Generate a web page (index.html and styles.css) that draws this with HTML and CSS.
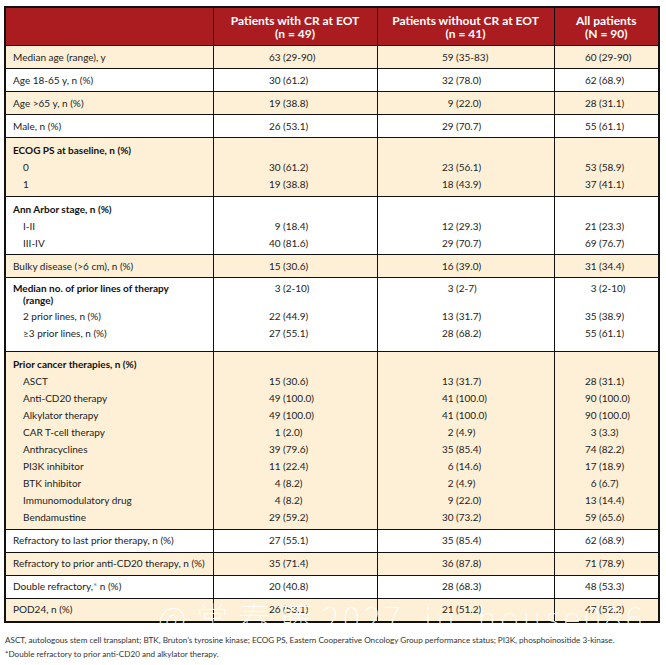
FILE: index.html
```html
<!DOCTYPE html>
<html>
<head>
<meta charset="utf-8">
<link rel="stylesheet" href="styles.css">
</head>
<body>
<div class="page">
  <table class="tbl">
    <colgroup>
      <col class="c1"><col class="c2"><col class="c3"><col class="c4">
    </colgroup>
    <thead>
      <tr>
        <th></th>
        <th>Patients with CR at EOT<br>(n = 49)</th>
        <th>Patients without CR at EOT<br>(n = 41)</th>
        <th>All patients<br>(N = 90)</th>
      </tr>
    </thead>
    <tbody>
      <tr class="cream">
        <td class="l"><div class="ln">Median age (range), y</div></td>
        <td class="v v2"><div class="ln"><span class="n">63</span> (29-90)</div></td>
        <td class="v v3"><div class="ln"><span class="n">59</span> (35-83)</div></td>
        <td class="v v4"><div class="ln"><span class="n">60</span> (29-90)</div></td>
      </tr>
      <tr>
        <td class="l"><div class="ln">Age 18-65 y, n (%)</div></td>
        <td class="v v2"><div class="ln"><span class="n">30</span> (61.2)</div></td>
        <td class="v v3"><div class="ln"><span class="n">32</span> (78.0)</div></td>
        <td class="v v4"><div class="ln"><span class="n">62</span> (68.9)</div></td>
      </tr>
      <tr class="cream">
        <td class="l"><div class="ln">Age &gt;65 y, n (%)</div></td>
        <td class="v v2"><div class="ln"><span class="n">19</span> (38.8)</div></td>
        <td class="v v3"><div class="ln"><span class="n">9</span> (22.0)</div></td>
        <td class="v v4"><div class="ln"><span class="n">28</span> (31.1)</div></td>
      </tr>
      <tr>
        <td class="l"><div class="ln">Male, n (%)</div></td>
        <td class="v v2"><div class="ln"><span class="n">26</span> (53.1)</div></td>
        <td class="v v3"><div class="ln"><span class="n">29</span> (70.7)</div></td>
        <td class="v v4"><div class="ln"><span class="n">55</span> (61.1)</div></td>
      </tr>
      <tr class="cream g">
        <td class="l">
          <div class="ln b">ECOG PS at baseline, n (%)</div>
          <div class="ln sub">0</div>
          <div class="ln sub">1</div>
        </td>
        <td class="v v2"><div class="ln"></div><div class="ln"><span class="n">30</span> (61.2)</div><div class="ln"><span class="n">19</span> (38.8)</div></td>
        <td class="v v3"><div class="ln"></div><div class="ln"><span class="n">23</span> (56.1)</div><div class="ln"><span class="n">18</span> (43.9)</div></td>
        <td class="v v4"><div class="ln"></div><div class="ln"><span class="n">53</span> (58.9)</div><div class="ln"><span class="n">37</span> (41.1)</div></td>
      </tr>
      <tr class="g">
        <td class="l">
          <div class="ln b">Ann Arbor stage, n (%)</div>
          <div class="ln sub">I-II</div>
          <div class="ln sub">III-IV</div>
        </td>
        <td class="v v2"><div class="ln"></div><div class="ln"><span class="n">9</span> (18.4)</div><div class="ln"><span class="n">40</span> (81.6)</div></td>
        <td class="v v3"><div class="ln"></div><div class="ln"><span class="n">12</span> (29.3)</div><div class="ln"><span class="n">29</span> (70.7)</div></td>
        <td class="v v4"><div class="ln"></div><div class="ln"><span class="n">21</span> (23.3)</div><div class="ln"><span class="n">69</span> (76.7)</div></td>
      </tr>
      <tr class="cream">
        <td class="l"><div class="ln">Bulky disease (&gt;6 cm), n (%)</div></td>
        <td class="v v2"><div class="ln"><span class="n">15</span> (30.6)</div></td>
        <td class="v v3"><div class="ln"><span class="n">16</span> (39.0)</div></td>
        <td class="v v4"><div class="ln"><span class="n">31</span> (34.4)</div></td>
      </tr>
      <tr class="g med">
        <td class="l">
          <div class="ttl b">Median no. of prior lines of therapy<br>(range)</div>
          <div class="ln sub">2 prior lines, n (%)</div>
          <div class="ln sub">≥3 prior lines, n (%)</div>
        </td>
        <td class="v v2"><div class="ttl"><span class="n">3</span> (2-10)</div><div class="ln"><span class="n">22</span> (44.9)</div><div class="ln"><span class="n">27</span> (55.1)</div></td>
        <td class="v v3"><div class="ttl"><span class="n">3</span> (2-7)</div><div class="ln"><span class="n">13</span> (31.7)</div><div class="ln"><span class="n">28</span> (68.2)</div></td>
        <td class="v v4"><div class="ttl"><span class="n">3</span> (2-10)</div><div class="ln"><span class="n">35</span> (38.9)</div><div class="ln"><span class="n">55</span> (61.1)</div></td>
      </tr>
      <tr class="cream g">
        <td class="l">
          <div class="ln b">Prior cancer therapies, n (%)</div>
          <div class="ln sub">ASCT</div>
          <div class="ln sub">Anti-CD20 therapy</div>
          <div class="ln sub">Alkylator therapy</div>
          <div class="ln sub">CAR T-cell therapy</div>
          <div class="ln sub">Anthracyclines</div>
          <div class="ln sub">PI3K inhibitor</div>
          <div class="ln sub">BTK inhibitor</div>
          <div class="ln sub">Immunomodulatory drug</div>
          <div class="ln sub">Bendamustine</div>
        </td>
        <td class="v v2">
          <div class="ln"></div>
          <div class="ln"><span class="n">15</span> (30.6)</div>
          <div class="ln"><span class="n">49</span> (100.0)</div>
          <div class="ln"><span class="n">49</span> (100.0)</div>
          <div class="ln"><span class="n">1</span> (2.0)</div>
          <div class="ln"><span class="n">39</span> (79.6)</div>
          <div class="ln"><span class="n">11</span> (22.4)</div>
          <div class="ln"><span class="n">4</span> (8.2)</div>
          <div class="ln"><span class="n">4</span> (8.2)</div>
          <div class="ln"><span class="n">29</span> (59.2)</div>
        </td>
        <td class="v v3">
          <div class="ln"></div>
          <div class="ln"><span class="n">13</span> (31.7)</div>
          <div class="ln"><span class="n">41</span> (100.0)</div>
          <div class="ln"><span class="n">41</span> (100.0)</div>
          <div class="ln"><span class="n">2</span> (4.9)</div>
          <div class="ln"><span class="n">35</span> (85.4)</div>
          <div class="ln"><span class="n">6</span> (14.6)</div>
          <div class="ln"><span class="n">2</span> (4.9)</div>
          <div class="ln"><span class="n">9</span> (22.0)</div>
          <div class="ln"><span class="n">30</span> (73.2)</div>
        </td>
        <td class="v v4">
          <div class="ln"></div>
          <div class="ln"><span class="n">28</span> (31.1)</div>
          <div class="ln"><span class="n">90</span> (100.0)</div>
          <div class="ln"><span class="n">90</span> (100.0)</div>
          <div class="ln"><span class="n">3</span> (3.3)</div>
          <div class="ln"><span class="n">74</span> (82.2)</div>
          <div class="ln"><span class="n">17</span> (18.9)</div>
          <div class="ln"><span class="n">6</span> (6.7)</div>
          <div class="ln"><span class="n">13</span> (14.4)</div>
          <div class="ln"><span class="n">59</span> (65.6)</div>
        </td>
      </tr>
      <tr>
        <td class="l"><div class="ln">Refractory to last prior therapy, n (%)</div></td>
        <td class="v v2"><div class="ln"><span class="n">27</span> (55.1)</div></td>
        <td class="v v3"><div class="ln"><span class="n">35</span> (85.4)</div></td>
        <td class="v v4"><div class="ln"><span class="n">62</span> (68.9)</div></td>
      </tr>
      <tr class="cream">
        <td class="l"><div class="ln">Refractory to prior anti-CD20 therapy, n (%)</div></td>
        <td class="v v2"><div class="ln"><span class="n">35</span> (71.4)</div></td>
        <td class="v v3"><div class="ln"><span class="n">36</span> (87.8)</div></td>
        <td class="v v4"><div class="ln"><span class="n">71</span> (78.9)</div></td>
      </tr>
      <tr>
        <td class="l"><div class="ln">Double refractory,<span class="star">*</span> n (%)</div></td>
        <td class="v v2"><div class="ln"><span class="n">20</span> (40.8)</div></td>
        <td class="v v3"><div class="ln"><span class="n">28</span> (68.3)</div></td>
        <td class="v v4"><div class="ln"><span class="n">48</span> (53.3)</div></td>
      </tr>
      <tr class="cream">
        <td class="l"><div class="ln">POD24, n (%)</div></td>
        <td class="v v2"><div class="ln"><span class="n">26</span> (53.1)</div></td>
        <td class="v v3"><div class="ln"><span class="n">21</span> (51.2)</div></td>
        <td class="v v4"><div class="ln"><span class="n">47</span> (52.2)</div></td>
      </tr>
    </tbody>
  </table>
  <div class="notes">
    <p>ASCT, autologous stem cell transplant; BTK, Bruton’s tyrosine kinase; ECOG PS, Eastern Cooperative Oncology Group performance status; PI3K, phosphoinositide 3-kinase.</p>
    <p>*Double refractory to prior anti-CD20 and alkylator therapy.</p>
  </div>
  <div class="wm">@<span class="cjk">常春藤</span>2027 in house086</div>
</div>
</body>
</html>
```

FILE: styles.css
```css
html, body {
  margin: 0;
  padding: 0;
  background: #fff;
}
.page {
  position: relative;
  padding: 6px 0 0 4px;
  font-family: Lato, "Noto Sans", sans-serif;
  color: #222;
}
.tbl {
  width: 654px;
  border-collapse: collapse;
  table-layout: fixed;
  font-size: 10px;
  border: 2px solid #111;
}
.c1 { width: 208px; }
.c2 { width: 164px; }
.c3 { width: 177px; }
.c4 { width: 105px; }
.tbl th {
  background: #ab1c20;
  color: #fff;
  font-weight: 700;
  font-size: 12px;
  line-height: 13px;
  padding: 6px 0 5px;
  text-align: center;
  border: 1.5px solid #111;
}
.tbl td {
  border: 1.5px solid #111;
  padding: 2.5px 0 2.5px;
  vertical-align: top;
}
.tbl tr.g td { padding-top: 4px; }
.tbl tr.med td { padding-bottom: 9.5px; }
.tbl tr.cream td { background: #fdf0d7; }
.tbl td.l { padding-left: 7px; }
.ln {
  height: 17px;
  line-height: 17px;
  white-space: nowrap;
}
.b { font-weight: 700; color: #111; }
.sub { padding-left: 10px; }
.ttl {
  line-height: 12.4px;
  height: 25.5px;
  padding-left: 10px;
  text-indent: -10px;
  white-space: nowrap;
}
.v .ttl { padding-left: 0; text-indent: 0; }
.n {
  display: inline-block;
  width: 14px;
  text-align: right;
}
.v2 { padding-left: 53px !important; }
.v3 { padding-left: 62px !important; }
.v4 { padding-left: 28px !important; }
.star { color: #1b9ad6; }
.notes {
  margin-top: 10px;
  font-size: 8.15px;
  color: #333;
  padding-left: 1px;
}
.notes p {
  margin: 0;
  line-height: 14px;
}
.wm {
  position: absolute;
  left: 158px;
  top: 600px;
  font-family: "Noto Sans CJK SC", sans-serif;
  font-weight: 100;
  font-size: 32px;
  line-height: 32px;
  letter-spacing: 4px;
  word-spacing: 8px;
  color: rgba(255, 255, 255, 0.92);
  white-space: nowrap;
  pointer-events: none;
}
.wm .cjk {
  letter-spacing: 10px;
  margin-left: 6px;
}
```
